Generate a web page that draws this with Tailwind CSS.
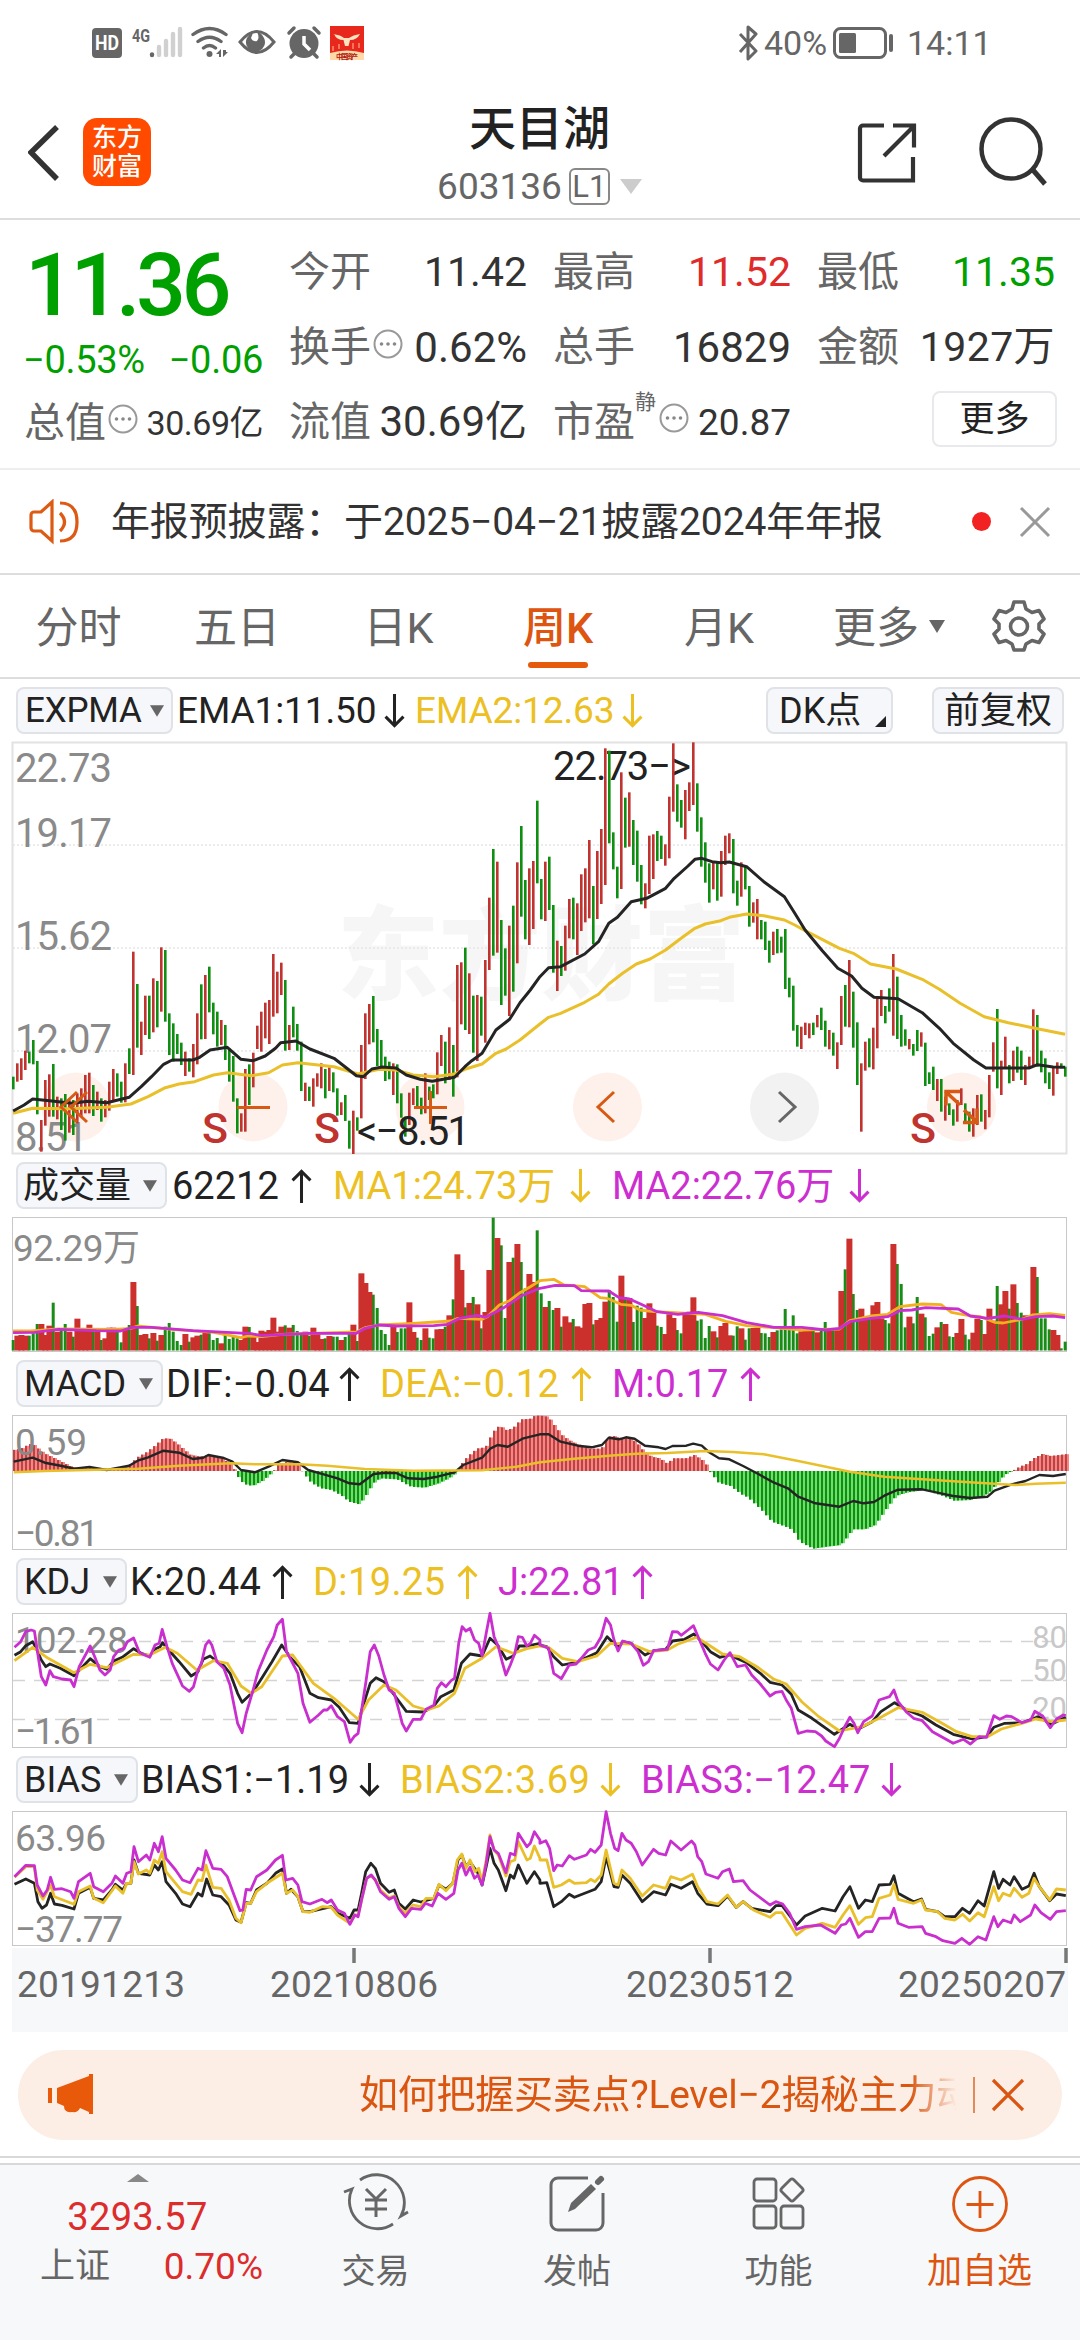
<!DOCTYPE html>
<html lang="zh-CN">
<head>
    <meta charset="UTF-8">
    <meta name="viewport" content="width=device-width, initial-scale=1.0">
    <title>天目湖 603136</title>
    <script src="https://cdn.jsdelivr.net/npm/@tailwindcss/browser@4"></script>
</head>
<body class="bg-white w-[1080px] h-[2340px] overflow-hidden font-[Roboto,'Noto_Sans_CJK_SC',sans-serif] text-[#222] leading-none">
    <!-- Shared icons -->
    <svg width="0" height="0" class="absolute">
        <symbol id="up" viewBox="0 0 22 36"><path d="M11 36V2M1.500 12L11 2.500l9.500 9.500" fill="none" stroke="currentColor" stroke-width="3.200"/></symbol>
        <symbol id="down" viewBox="0 0 22 36"><path d="M11 0v34M1.500 24l9.500 9.500 9.500-9.500" fill="none" stroke="currentColor" stroke-width="3.200"/></symbol>
        <symbol id="dots" viewBox="0 0 30 30"><circle cx="15" cy="15" r="13.5" fill="none" stroke="#999" stroke-width="2"/><circle cx="8.5" cy="15" r="1.8" fill="#888"/><circle cx="15" cy="15" r="1.8" fill="#888"/><circle cx="21.5" cy="15" r="1.8" fill="#888"/></symbol>
        <symbol id="tri" viewBox="0 0 16 13"><path d="M0 0h16L8 13z" fill="#666"/></symbol>
    </svg>

    <!-- Status bar -->
    <div class="h-[84px] flex items-center justify-between pl-[92px] pr-[88px] pt-0.5 text-[#666]">
        <svg width="274" height="36" viewBox="92 25 274 36">
            <rect x="92" y="28" width="30" height="30" rx="4" fill="#666"/>
            <text x="95" y="50" font-size="20" font-weight="700" fill="#fff" textLength="24" lengthAdjust="spacingAndGlyphs">HD</text>
            <text x="132" y="41.500" font-size="19" font-weight="700" fill="#666" textLength="18" lengthAdjust="spacingAndGlyphs">4G</text>
            <g stroke-width="4.4" stroke-linecap="round" stroke="#d0d0d0">
                <path d="M152 54.5v.5" stroke="#666"/>
                <path d="M159 47v8M166 41v14M173 34v21M180 29v26"/>
            </g>
            <g fill="none" stroke="#666" stroke-width="3.4" stroke-linecap="round">
                <path d="M193 34.5q16.500-12 33 0M198 41.500q11.500-8.500 23 0M203.500 48q6-5 12 0"/>
            </g>
            <circle cx="209.500" cy="54" r="3" fill="#666"/>
            <path d="M216 54l5-5v8h-2v-3zM223 50v7l5-5h-2v-2z" fill="#666"/>
            <path d="M240 42q17-21 34 0q-17 21-34 0z" fill="none" stroke="#666" stroke-width="3"/>
            <path d="M253 33a9.500 9.500 0 1 0 11 5q-3-6-7-6q3 6 0 9q-4 1-6-3z" fill="#666"/>
            <circle cx="304" cy="43.500" r="14.500" fill="#666"/>
            <path d="M289 33l5-5M319 33l-5-5M294 54l-3 3M314 54l3 3" stroke="#666" stroke-width="3.500" stroke-linecap="round"/>
            <path d="M304 36v8l6 6" fill="none" stroke="#fff" stroke-width="3.500"/>
            <rect x="330" y="26" width="34" height="34" fill="#e8281c"/>
            <path d="M330 53q17-5 34 0v7h-34z" fill="#ffd9a8"/>
            <path d="M333 34q8 1 11 4h5q4-3 11-4q-3 6-10 6l-1.500 6h-3.500l-1.500-6q-7 0-9.500-6z" fill="#ffe2c0"/>
            <path d="M333 51v-5M339 49v-5M353 49v-6M359 48v-5" stroke="#f58a6a" stroke-width="1.600"/>
            <text x="336" y="58.500" font-size="7" font-weight="700" fill="#b01810" textLength="22">中国资产</text>
        </svg>
        <div class="flex items-center text-[34px]">
            <svg width="24" height="36" viewBox="0 0 24 36"><path d="M3 9l16 17-8 8V2l8 7L3 27" fill="none" stroke="#666" stroke-width="3" stroke-linejoin="round"/></svg>
            <span class="ml-[3px] w-[66px]">40%</span>
            <svg width="62" height="34" viewBox="0 0 62 34" class="ml-[3px]"><rect x="1.500" y="2.500" width="51" height="29" rx="6" fill="none" stroke="#666" stroke-width="3"/><rect x="6" y="7" width="17" height="20" rx="1.500" fill="#666"/><path d="M58 10v14" stroke="#666" stroke-width="4" stroke-linecap="round"/></svg>
            <span class="ml-3 w-[85px]">14:11</span>
        </div>
    </div>

    <!-- Title bar -->
    <div class="h-[136px] border-b-2 border-[#ddd] flex justify-between pl-[28px] pr-[33px]">
        <div class="flex items-start pt-[34px] w-[400px]">
            <svg width="36" height="60" viewBox="2 0 36 60" class="mt-1"><path d="M31 5L5 30.500 31 57" fill="none" stroke="#333" stroke-width="5.500"/></svg>
            <div class="ml-[19px] size-[68px] rounded-[14px] bg-[#ff4a00] text-white text-[25px] font-medium leading-[29px] flex flex-col items-center justify-center"><span>东方</span><span>财富</span></div>
        </div>
        <div class="flex flex-col items-center pt-[21px]">
            <div class="text-[47px] leading-[48px] font-medium">天目湖</div>
            <div class="flex items-center mt-[15px] text-[37px] text-[#666]">
                <span>603136</span>
                <span class="ml-[7px] w-[41px] h-[37px] border-2 border-[#888] rounded-md text-[31px] flex items-center justify-center">L1</span>
                <svg width="22" height="15" viewBox="0 0 22 15" class="ml-[10px]"><path d="M0 0h22L11 15z" fill="#ccc"/></svg>
            </div>
        </div>
        <div class="flex items-start justify-end pt-[32px] w-[396px] gap-[62px]">
            <svg width="60" height="62" viewBox="0 0 60 62" class="mt-[6px]"><path d="M27 3.500H6a3 3 0 0 0-3 3v49a3 3 0 0 0 3 3h50V35M36 3.500h21v22M56 5L27 34" fill="none" stroke="#333" stroke-width="4.200"/></svg>
            <svg width="68" height="70" viewBox="0 0 68 70" class="mt-[1px]"><circle cx="32" cy="32" r="29.500" fill="none" stroke="#333" stroke-width="4.500"/><path d="M54 53l12 14" stroke="#333" stroke-width="5"/></svg>
        </div>
    </div>

    <!-- Quote -->
    <div class="h-[250px] border-b-2 border-[#eee] px-[25px] pt-[15px] grid grid-cols-4 gap-x-[26px] text-[41px] text-[#666]">
        <div class="flex flex-col text-[#00a000]">
            <div class="text-[88px] h-[97px] leading-[99px] font-medium tracking-[-4.500px]">11.36</div>
            <div class="flex justify-between text-[38px] h-[54px] items-center tracking-[-0.300px] -ml-[2px] pt-[2px]"><span>−0.53%</span><span>−0.06</span></div>
            <div class="flex items-center h-[70px] mt-[2px] text-[#666] -ml-[1px]"><span>总值</span><svg width="30" height="30" class="ml-0.5 mb-2 shrink-0"><use href="#dots"/></svg><span class="ml-auto text-[34px] text-[#333] tracking-[-0.500px] whitespace-nowrap">30.69亿</span></div>
        </div>
        <div class="flex flex-col">
            <div class="flex items-center justify-between h-[75px]"><span>今开</span><span class="text-[#333]">11.42</span></div>
            <div class="flex items-center h-[75px]"><span>换手</span><svg width="30" height="30" class="ml-0.5 mb-2 shrink-0"><use href="#dots"/></svg><span class="ml-auto text-[42px] text-[#333]">0.62%</span></div>
            <div class="flex items-center justify-between h-[74px]"><span>流值</span><span class="text-[42px] text-[#333] whitespace-nowrap">30.69亿</span></div>
        </div>
        <div class="flex flex-col">
            <div class="flex items-center justify-between h-[75px]"><span>最高</span><span class="text-[#e02b2b]">11.52</span></div>
            <div class="flex items-center justify-between h-[75px]"><span>总手</span><span class="text-[42px] text-[#333]">16829</span></div>
            <div class="flex items-center h-[74px]"><span>市盈</span><span class="text-[21px] mb-10">静</span><svg width="30" height="30" class="ml-[3px] mb-2 shrink-0"><use href="#dots"/></svg><span class="ml-auto text-[37px] text-[#333]">20.87</span></div>
        </div>
        <div class="flex flex-col">
            <div class="flex items-center justify-between h-[75px]"><span>最低</span><span class="text-[#00a000]">11.35</span></div>
            <div class="flex items-center justify-between h-[75px]"><span>金额</span><span class="text-[#333] tracking-[0.400px] whitespace-nowrap">1927万</span></div>
            <div class="self-end mt-[6px] -mr-[2px] w-[125px] h-[56px] border-2 border-[#e8e9ec] rounded-lg text-[35px] text-[#222] flex items-center justify-center">更多</div>
        </div>
    </div>

    <!-- Notice -->
    <div class="h-[105px] border-b-2 border-[#ddd] flex items-center pl-[28px] pr-[29px] text-[39px] text-[#333]">
        <svg width="54" height="46" viewBox="0 0 54 46"><path d="M24 3v39L13 32H6a3 3 0 0 1-3-3V16a3 3 0 0 1 3-3h7zM32 14q9 9 0 18M32 4q17 0 17 19t-17 19" fill="none" stroke="#dd5a14" stroke-width="3.200"/></svg>
        <span class="ml-[29px] tracking-[-0.150px] whitespace-nowrap pt-[2px]">年报预披露：于2025−04−21披露2024年年报</span>
        <span class="ml-auto size-[19px] rounded-full bg-[#f22222]"></span>
        <svg width="32" height="32" viewBox="0 0 32 32" class="ml-[28px]"><path d="M2 2l28 28M30 2L2 30" stroke="#999" stroke-width="3"/></svg>
    </div>

    <!-- Period tabs -->
    <div class="h-[104px] border-b-2 border-[#ddd] flex items-center text-[43px] text-[#666]">
        <span class="w-[157px] text-center pt-[4px]">分时</span>
        <span class="w-[160px] text-center pt-[4px]">五日</span>
        <span class="w-[163px] text-center pt-[4px]">日K</span>
        <span class="w-[156px] text-center pt-[4px] text-[#dd5510] font-medium relative">周K<i class="absolute left-[48px] top-[59px] w-[60px] h-[6px] rounded-sm bg-[#e65a0c]"></i></span>
        <span class="w-[166px] text-center pt-[4px]">月K</span>
        <span class="ml-[31px] pt-[4px]">更多</span>
        <svg width="16" height="13" class="ml-[10px]"><use href="#tri"/></svg>
        <svg width="54" height="54" viewBox="0 0 54 54" class="ml-[47px]"><path d="M22 3h10l2 7 6 3.500 7-2 5 8.500-5 5v5l5 5-5 8.500-7-2-6 3.500-2 6H22l-2-6-6-3.500-7 2L2 35l5-5v-5l-5-5 5-8.500 7 2 6-3.500z" fill="none" stroke="#666" stroke-width="3.600" stroke-linejoin="round"/><circle cx="27" cy="27.500" r="8.500" fill="none" stroke="#666" stroke-width="3.600"/></svg>
    </div>

    <!-- EXPMA -->
    <div class="h-[62px] flex items-center pl-[16px] pt-[1px] text-[37px]">
        <div class="w-[157px] h-[47px] bg-[#f6f7fa] border-2 border-[#dfe2e7] rounded-lg flex items-center justify-between pl-[7px] pr-[7px] text-[35px] tracking-[-0.200px]">EXPMA<svg width="14" height="12"><use href="#tri" width="14" height="12"/></svg></div>
        <div class="ml-[4px] w-[238px] flex items-center"><span class="w-[207px] tracking-[-0.100px]">EMA1:11.50</span><svg width="21" height="34"><use href="#down"/></svg></div>
        <div class="w-[351px] flex items-center text-[#ecc022]"><span class="w-[207px] tracking-[-0.100px]">EMA2:12.63</span><svg width="21" height="34"><use href="#down"/></svg></div>
        <div class="w-[127px] h-[47px] bg-[#f6f7fa] border-2 border-[#dfe2e7] rounded-lg flex items-center pl-[11px] text-[36px] relative">DK点<svg width="11" height="11" viewBox="0 0 11 11" class="absolute right-[5px] bottom-[5px]"><path d="M11 0v11H0z" fill="#222"/></svg></div>
        <div class="ml-[39px] w-[132px] h-[47px] bg-[#f6f7fa] border-2 border-[#dfe2e7] rounded-lg flex items-center justify-center text-[36px] whitespace-nowrap">前复权</div>
    </div>
    <svg width="1080" height="414" viewBox="0 741 1080 414" class="block">
        <text x="337" y="992" font-size="102" font-weight="900" fill="#f6f6f6" textLength="408" lengthAdjust="spacingAndGlyphs">东方财富</text>
        <path d="M13 845h1053M13 948h1053M13 1051h1053" stroke="#e6e6e6" stroke-width="1.500" stroke-dasharray="2 2"/>
        <rect x="12.500" y="742.500" width="1054" height="411" fill="none" stroke="#e2e2e2" stroke-width="2"/>
        <g fill="#fef0ea"><circle cx="76" cy="1107" r="34.500"/><circle cx="253" cy="1107" r="34.500"/><circle cx="430" cy="1107" r="34.500"/><circle cx="607.500" cy="1107" r="34.500"/><circle cx="961.500" cy="1107" r="34.500"/></g>
        <circle cx="784.500" cy="1107" r="34.500" fill="#f2f2f2"/>
        <g font-size="40" fill="#8a8a8a">
            <text x="15" y="782" textLength="97">22.73</text><text x="15" y="847" textLength="97">19.17</text><text x="15" y="950" textLength="97">15.62</text><text x="15" y="1053" textLength="97">12.07</text><text x="15" y="1151" textLength="73">8.51</text>
        </g>
        <text x="553" y="780" font-size="40" fill="#222" textLength="138">22.73−&gt;</text>
        <g id="candles"></g>
        <g id="ema"></g>
        <g font-size="43" font-weight="500" fill="#c03430"><text x="202" y="1143">S</text><text x="314" y="1143">S</text><text x="910" y="1143">S</text></g>
        <text x="357" y="1145" font-size="40" fill="#222" textLength="113">&lt;−8.51</text>
        <g fill="none" stroke="#d75a14" stroke-width="3">
            <path d="M77 1092l-16 15 16 15M87 1092l-16 15 16 15M237 1107.500h33M414 1107.500h33M430.500 1091v33M614 1092l-16 15 16 15"/>
            <path d="M960 1091.500h-14v14M945 1091l15 14M963 1122.500h14v-14M978 1123l-14-13" stroke-width="3.500"/>
        </g>
        <path d="M779 1092l16 15-16 15" fill="none" stroke="#666" stroke-width="3"/>
    </svg>

    <!-- Volume -->
    <div class="h-[61px] flex items-center pl-[16px] text-[38px]">
        <div class="w-[151px] h-[47px] bg-[#f6f7fa] border-2 border-[#dfe2e7] rounded-lg flex items-center justify-between pl-[5px] pr-[8px] text-[36px] whitespace-nowrap">成交量<svg width="14" height="12"><use href="#tri" width="14" height="12"/></svg></div>
        <div class="ml-[5px] w-[161px] flex items-center"><span class="w-[119px]">62212</span><svg width="21" height="34"><use href="#up"/></svg></div>
        <div class="w-[279px] flex items-center text-[#ecc022]"><span class="w-[237px] whitespace-nowrap">MA1:24.73万</span><svg width="21" height="34"><use href="#down"/></svg></div>
        <div class="flex items-center text-[#cc2ed0]"><span class="w-[237px] whitespace-nowrap">MA2:22.76万</span><svg width="21" height="34"><use href="#down"/></svg></div>
    </div>
    <svg width="1080" height="137" viewBox="0 1216 1080 137" class="block">
        <rect x="12.500" y="1217.500" width="1054" height="134" fill="none" stroke="#c8c8c8"/>
        <text x="13" y="1261" font-size="37" fill="#8a8a8a" textLength="127">92.29万</text>
        <g id="volume"></g>
    </svg>

    <!-- MACD -->
    <div class="h-[61px] flex items-center pl-[16px] text-[38px]">
        <div class="w-[147px] h-[47px] bg-[#f6f7fa] border-2 border-[#dfe2e7] rounded-lg flex items-center justify-between pl-[6px] pr-[8px] text-[36px]">MACD<svg width="14" height="12"><use href="#tri" width="14" height="12"/></svg></div>
        <div class="ml-[3px] w-[214px] flex items-center"><span class="w-[173px] tracking-[0.300px]">DIF:−0.04</span><svg width="21" height="34"><use href="#up"/></svg></div>
        <div class="w-[232px] flex items-center text-[#ecc022]"><span class="w-[191px] tracking-[0.300px]">DEA:−0.12</span><svg width="21" height="34"><use href="#up"/></svg></div>
        <div class="flex items-center text-[#cc2ed0]"><span class="w-[128px]">M:0.17</span><svg width="21" height="34"><use href="#up"/></svg></div>
    </div>
    <svg width="1080" height="137" viewBox="0 1414 1080 137" class="block">
        <rect x="12.500" y="1415.500" width="1054" height="134" fill="none" stroke="#c8c8c8"/>
        <g id="macd"></g>
        <g font-size="37" fill="#8a8a8a"><text x="15" y="1455">0.59</text><text x="15" y="1546" textLength="84">−0.81</text></g>
        <g id="macdLines"></g>
    </svg>

    <!-- KDJ -->
    <div class="h-[61px] flex items-center pl-[16px] text-[38px]">
        <div class="w-[111px] h-[47px] bg-[#f6f7fa] border-2 border-[#dfe2e7] rounded-lg flex items-center justify-between pl-[6px] pr-[8px] text-[36px]">KDJ<svg width="14" height="12"><use href="#tri" width="14" height="12"/></svg></div>
        <div class="ml-[3px] w-[183px] flex items-center"><span class="w-[142px] tracking-[0.400px]">K:20.44</span><svg width="21" height="34"><use href="#up"/></svg></div>
        <div class="w-[185px] flex items-center text-[#ecc022]"><span class="w-[144px] tracking-[0.400px]">D:19.25</span><svg width="21" height="34"><use href="#up"/></svg></div>
        <div class="flex items-center text-[#cc2ed0]"><span class="w-[134px]">J:22.81</span><svg width="21" height="34"><use href="#up"/></svg></div>
    </div>
    <svg width="1080" height="137" viewBox="0 1612 1080 137" class="block">
        <path d="M13 1641.500h1053M13 1680.500h1053M13 1719.500h1053" stroke="#d4d4d4" stroke-width="1.500" stroke-dasharray="12 9"/>
        <rect x="12.500" y="1613.500" width="1054" height="134" fill="none" stroke="#c8c8c8"/>
        <g font-size="31" fill="#c8c8c8" text-anchor="end"><text x="1067" y="1648">80</text><text x="1067" y="1681">50</text><text x="1067" y="1719">20</text></g>
        <g font-size="37" fill="#8a8a8a"><text x="15" y="1653" textLength="113">102.28</text><text x="15" y="1744" textLength="84">−1.61</text></g>
        <g id="kdj"></g>
    </svg>

    <!-- BIAS -->
    <div class="h-[61px] flex items-center pl-[16px] text-[38px]">
        <div class="w-[122px] h-[47px] bg-[#f6f7fa] border-2 border-[#dfe2e7] rounded-lg flex items-center justify-between pl-[6px] pr-[8px] text-[36px]">BIAS<svg width="14" height="12"><use href="#tri" width="14" height="12"/></svg></div>
        <div class="ml-[3px] w-[259px] flex items-center"><span class="w-[218px]">BIAS1:−1.19</span><svg width="21" height="34"><use href="#down"/></svg></div>
        <div class="w-[241px] flex items-center text-[#ecc022]"><span class="w-[200px] tracking-[0.400px]">BIAS2:3.69</span><svg width="21" height="34"><use href="#down"/></svg></div>
        <div class="flex items-center text-[#cc2ed0]"><span class="w-[240px]">BIAS3:−12.47</span><svg width="21" height="34"><use href="#down"/></svg></div>
    </div>
    <svg width="1080" height="137" viewBox="0 1810 1080 137" class="block">
        <rect x="12.500" y="1811.500" width="1054" height="134" fill="none" stroke="#c8c8c8"/>
        <g font-size="37" fill="#8a8a8a"><text x="15" y="1851" textLength="91">63.96</text><text x="15" y="1942" textLength="108">−37.77</text></g>
        <g id="bias"></g>
    </svg>
    <svg width="1080" height="103" viewBox="0 1947 1080 103" class="block">
        <rect x="12" y="1948" width="1056" height="84" fill="#f7f8fa"/>
        <path d="M354 1948v15M710 1948v15M1066 1948v15" stroke="#777" stroke-width="3.500"/>
        <g font-size="37" fill="#666"><text x="17" y="1997" textLength="168">20191213</text><text x="270" y="1997" textLength="168">20210806</text><text x="626" y="1997" textLength="168">20230512</text><text x="898" y="1997" textLength="168">20250207</text></g>
    </svg>

    <!-- Promo banner -->
    <div class="mx-[18px] h-[90px] rounded-full bg-[#fdeee5] flex items-center pl-[30px] pr-[37px] text-[#d95510]">
        <svg width="46" height="42" viewBox="0 0 46 42"><path d="M0 14h4v15H0zM9 14L41 2V0h4v40h-4v-2l-9-4q-2 5-8 4-8 1-8-6L9 29z" fill="#e85a0a"/></svg>
        <div class="ml-[265px] w-[598px] overflow-hidden whitespace-nowrap text-[39px] leading-[60px] tracking-[-0.250px] [mask-image:linear-gradient(to_right,#000_92%,transparent)]">如何把握买卖点?Level−2揭秘主力动向</div>
        <span class="ml-auto w-[2px] h-[36px] bg-[#e08a5c]"></span>
        <svg width="34" height="34" viewBox="0 0 34 34" class="ml-[16px]"><path d="M2 2l30 30M32 2L2 32" stroke="#d95510" stroke-width="3.200"/></svg>
    </div>
    <div class="h-[18px] border-b-2 border-[#d8d8d8]"></div>

    <!-- Bottom bar -->
    <div class="mt-[5px] h-[178px] border-t-2 border-[#d8d8d8] bg-[#f7f8fa] flex text-[34px] text-[#666]">
        <div class="w-[275px] flex flex-col items-center pt-[9px]">
            <svg width="22" height="8" viewBox="0 0 22 8"><path d="M0 8h22L11 0z" fill="#888"/></svg>
            <div class="mt-[16px] text-[38px] text-[#dc2c2c] tracking-[0.300px]">3293.57</div>
            <div class="mt-[12px] ml-[28px] w-[223px] flex items-center justify-between"><span class="text-[35px]">上证</span><span class="text-[37px] text-[#dc2c2c]">0.70%</span></div>
        </div>
        <div class="w-[201px] flex flex-col items-center pt-[8px]">
            <svg width="66" height="60" viewBox="0 0 66 60"><path d="M17 7A28 28 0 0 1 58 43l7-4M50 51A28 28 0 0 1 9 16l-8 3" fill="none" stroke="#666" stroke-width="2.800"/><path d="M23 16l10 10 10-10M33 26v18M22 27h22M22 36h22" fill="none" stroke="#666" stroke-width="3"/></svg>
            <span class="mt-[21px]">交易</span>
        </div>
        <div class="w-[202px] flex flex-col items-center pt-[8px]">
            <svg width="58" height="60" viewBox="0 0 58 60"><path d="M40 5H10a7 7 0 0 0-7 7v38a7 7 0 0 0 7 7h38a7 7 0 0 0 7-7V20" fill="none" stroke="#666" stroke-width="3"/><path d="M20 39l3-9 20-19 5 5-21 20z" fill="#666"/><path d="M50 9l3-3" stroke="#666" stroke-width="6" stroke-linecap="round"/></svg>
            <span class="mt-[21px]">发帖</span>
        </div>
        <div class="w-[201px] flex flex-col items-center pt-[8px]">
            <svg width="54" height="60" viewBox="0 0 54 60"><g fill="none" stroke="#666" stroke-width="2.800"><rect x="2" y="6" width="22" height="22" rx="3"/><rect x="2" y="33" width="22" height="22" rx="3"/><rect x="29" y="33" width="22" height="22" rx="3"/><rect x="31.500" y="8.500" width="17" height="17" rx="2.500" transform="rotate(45 40 17)"/></g></svg>
            <span class="mt-[21px]">功能</span>
        </div>
        <div class="w-[201px] flex flex-col items-center pt-[8px] text-[#dd5510]">
            <svg width="60" height="60" viewBox="0 0 60 60"><circle cx="30" cy="31" r="26.500" fill="none" stroke="#dd5510" stroke-width="2.800"/><path d="M30 18v27M16.500 31.500h27" stroke="#dd5510" stroke-width="2.800"/></svg>
            <span class="mt-[21px] text-[35px]">加自选</span>
        </div>
    </div>

    <script>
        // One entry per week: colour, high, low, volume top (y values in thirds of a pixel)
        const weeks = `g1040,1078,540 r1000,1055,527 r985,1050,525 r962,1020,527 g965,1000,527 g930,1003,520 g993,1153,492 r1170,1265,492 r1050,1187,525 r1033,1160,497
g1002,1160,428 r1100,1168,515 g1105,1200,510 g1092,1232,492 r1110,1208,515 g1110,1215,530 r1090,1180,476 r1075,1160,510 r1035,1150,510 r1028,1150,494
g1065,1158,515 r1085,1140,515 g1105,1175,540 r1110,1162,535 r1055,1142,503 r1017,1110,503 g1030,1100,512 g1055,1118,547 r1000,1117,510 g955,1032,495
r665,1035,366 g762,953,438 r875,975,525 r797,915,522 g797,927,535 r745,907,519 g753,892,542 r652,845,525 g660,875,500 g850,975,489
g880,995,515 g912,972,543 g938,1005,555 r965,1038,522 g985,1025,545 r942,1042,532 r850,1003,527 g763,928,524 r735,927,515 g710,847,517
g818,913,540 g845,950,534 r870,945,550 g885,990,520 g955,1055,537 g978,1115,531 g1105,1210,535 r1150,1205,540 r1017,1205,500 g1003,1125,501
r968,1072,525 r887,957,546 r845,965,512 r818,925,515 r810,942,510 r672,860,473 r725,850,515 r698,795,500 g750,962,496 r885,960,503
g830,922,495 g882,962,513 g935,1083,525 r1058,1113,515 g1070,1113,527 r1045,1130,503 r1030,1070,520 r1000,1075,537 g1017,1105,535 r1012,1083,528
g1027,1087,530 g1075,1157,530 r1117,1155,540 g1095,1173,531 g1172,1256,520 r1142,1272,494 g1162,1202,543 r945,1165,340 r850,1047,369 r822,943,396
g798,937,404 g897,1008,444 g930,1012,510 g980,1053,522 g995,1048,555 r1000,1095,495 g1003,1120,516 g1090,1163,505 g1160,1220,505 r1088,1185,427
r1075,1125,516 g1068,1130,533 g1103,1153,540 r1030,1150,505 g1070,1110,533 g1063,1105,535 r967,1093,508 r915,1008,507 g935,1060,500 r892,1050,466
g945,1100,418 r705,1042,283 r697,883,330 g653,900,442 r730,912,429 g797,968,411 r795,993,433 g800,917,505 r690,938,456 r503,720,330
g357,677,173 r395,668,234 g570,825,256 g655,797,474 r587,858,306 g527,785,293 r397,700,252 g288,560,306 g450,628,385 r415,645,342
r393,597,366 g212,460,211 g447,568,400 r395,573,441 g380,540,423 g525,728,450 r632,783,444 g648,738,500 r587,722,469 r507,625,487
g503,628,477 r520,675,499 r433,603,503 r415,577,432 r330,565,429 g468,643,493 r363,567,480 r297,522,474 r55,465,425 g62,340,390
g307,418,411 g410,505,485 r127,477,347 g203,353,411 r187,350,414 g270,405,486 g302,455,437 g405,523,443 r460,535,474 r317,492,430
r313,447,455 g303,393,497 g317,387,501 r343,407,522 r200,385,463 r40,245,474 g163,275,510 g210,293,520 r180,328,460 r157,243,455
r37,225,412 g160,305,482 g262,410,478 g337,458,534 g400,518,498 r393,478,514 g398,512,532 r363,500,498 r317,405,489 r310,370,526
g327,490,527 g452,527,499 r397,500,505 g410,478,539 g468,590,505 r517,578,504 r507,628,503 g570,628,519 g575,660,520 g632,698,531
r605,675,516 g597,670,511 g620,668,508 g597,777,447 g743,802,508 g767,902,466 g885,950,520 r890,957,514 r878,915,513 r880,925,512
g878,915,512 r855,892,517 g833,900,506 g872,950,486 r900,958,508 g908,977,508 r937,1017,505 r798,945,393 g765,890,328 r690,892,236
g785,953,402 g877,1065,450 r1000,1205,446 r935,1022,475 g925,1012,474 r893,1018,436 r803,955,426 r780,858,475 g828,880,480 g775,845,490
r672,917,252 g740,927,312 g855,950,372 g898,947,502 r927,958,470 g942,977,490 g900,963,411 r907,950,461 g938,1068,472 g1027,1062,528
g1010,1080,521 r1047,1113,502 g1047,1145,486 r1100,1172,492 g1120,1155,529 g1138,1187,531 r1110,1175,519 r1075,1125,477 g1120,1175,524 g1145,1205,538
r1135,1220,518 r1095,1185,476 g1093,1175,480 r1140,1198,522 r1035,1162,446 r937,1025,482 g837,1075,378 r992,1095,433 r920,1015,393 g1005,1060,446
r962,1053,373 g950,1028,429 g962,1050,458 r1005,1065,466 r980,1012,475 r838,1010,321 g855,1010,351 g962,1027,475 g985,1060,475 g1027,1077,508
r1013,1097,510 r997,1032,525 g1000,1015,565 g1010,1040,545`.split(/\s+/);

        const RED = '#c03430', GREEN = '#0f8f12';
        const BLACK = '#242424', YELLOW = '#e9bf2a', PURPLE = '#c92fce';
        const XS = 2.904; // horizontal units per pixel
        const put = (id, html) => document.getElementById(id).insertAdjacentHTML('beforeend', html);

        // Points are "x,y x,y | x,y ..."; the part after the bar continues in the right half
        function points(str, top) {
            return str.split('|').flatMap((half, h) => half.trim().split(/\s+/).map(p => {
                const [x, y] = p.split(',').map(Number);
                return [(x + h * 1568) / XS, top + y / 3];
            }));
        }
        function line(id, color, top, str, width = 2.8) {
            const pts = points(str, top).map(p => p[0].toFixed(1) + ',' + p[1].toFixed(1)).join(' ');
            put(id, `<polyline points="${pts}" fill="none" stroke="${color}" stroke-width="${width}" stroke-linejoin="round"/>`);
        }

        // Candles and volume bars
        let candles = '', green = '', red = '';
        weeks.forEach((w, i) => {
            const [hi, lo, vol] = w.slice(1).split(',').map(Number);
            const up = w[0] === 'r', x = 13.2 + i * 4;
            candles += `<rect x="${x - 1.2}" y="${730 + hi / 3}" width="2.600" height="${(lo - hi) / 3}" fill="${up ? RED : GREEN}"/>`;
            const y = 1160 + vol / 3, h = 1350.5 - y;
            if (up) red += `<rect x="${x - 2.8}" y="${y}" width="6" height="${h}" fill="#cc302c"/>`;
            else green += `<rect x="${x - 1.5}" y="${y}" width="3" height="${h}" fill="#188c16"/>`;
        });
        put('candles', candles);
        put('volume', green + red);

        line('ema', YELLOW, 730, '38,1150 95,1135 200,1136 310,1132 380,1122 430,1100 480,1073 520,1062 565,1055 620,1035 660,1028 730,1037 780,1028 820,1005 865,998 970,1010 1040,1032 1100,1018 1150,1020 1200,1035 1260,1040 1320,1032 1350,1018 1400,1002 1440,970 1470,957 1510,930 1568,882 | 0,882 25,862 60,850 130,817 170,793 200,762 240,730 280,702 320,687 365,660 410,625 450,595 480,582 525,572 550,562 600,552 650,557 710,570 740,585 770,602 870,655 910,670 960,702 1035,717 1110,748 1160,778 1220,820 1290,860 1360,878 1430,893 1525,913', 3);
        line('ema', BLACK, 730, '38,1143 70,1125 95,1107 150,1113 210,1120 255,1114 310,1118 375,1102 410,1070 440,1040 475,1003 500,990 560,990 580,982 610,960 660,952 700,988 735,992 770,978 800,955 815,938 860,933 900,957 970,985 1010,1017 1035,1037 1055,1040 1080,1017 1110,1011 1150,1014 1180,1035 1220,1048 1255,1054 1320,1042 1350,1010 1370,992 1400,970 1440,900 1480,868 1510,818 1540,780 1568,740 | 0,740 25,713 60,710 130,672 170,635 200,580 225,562 265,515 310,505 365,475 390,445 430,408 450,388 470,385 500,395 525,398 550,396 600,410 650,455 710,500 740,550 770,600 820,662 865,715 905,738 935,775 970,802 1040,806 1110,848 1160,895 1200,940 1260,990 1295,1014 1420,1014 1445,1004 1490,1011 1525,1012', 3);

        line('volume', '#f2b01e', 1160, '38,513 90,513 170,507 330,508 380,505 400,498 500,508 620,517 670,527 700,533 720,528 760,530 820,523 900,520 1035,516 1060,503 1100,495 1200,490 1310,483 1330,475 1400,478 1415,470 1450,435 1480,422 1510,398 1540,380 1568,362 | 0,362 40,358 70,375 130,380 150,395 175,413 195,415 235,433 265,436 290,450 330,455 380,457 430,460 480,463 540,484 600,497 680,503 760,510 870,507 900,482 960,468 1010,463 1045,440 1110,432 1165,434 1195,457 1250,468 1280,470 1320,487 1345,489 1400,478 1430,465 1480,461 1525,466');
        line('volume', PURPLE, 1160, '38,518 100,517 170,508 280,512 350,513 385,502 440,502 560,512 660,517 730,521 760,527 830,523 900,520 1035,520 1060,505 1100,495 1150,498 1260,497 1300,493 1335,475 1385,466 1410,472 1460,445 1515,407 1568,385 | 0,385 45,376 100,377 120,392 200,393 230,413 260,417 300,436 340,455 400,463 460,457 530,467 600,488 680,502 760,502 830,510 870,505 900,485 960,475 1010,470 1045,452 1080,450 1120,443 1215,447 1250,468 1300,475 1350,468 1400,478 1440,470 1490,468 1525,473');

        // MACD histogram, interpolated from its outline
        const outline = points('36,870 60,865 75,856 90,850 110,868 125,880 150,892 175,905 200,918 220,926 260,922 300,926 340,926 370,918 395,892 420,878 445,858 470,835 490,836 510,850 530,868 550,885 580,890 605,885 640,895 665,910 680,933 690,955 705,972 730,978 760,962 790,935 805,912 830,906 860,912 875,935 900,968 930,985 960,990 990,1008 1010,1025 1040,1033 1060,1005 1080,970 1100,955 1150,958 1175,972 1190,980 1230,983 1270,970 1300,955 1320,940 1330,922 1345,900 1370,875 1390,862 1405,865 1425,822 1440,800 1455,802 1470,812 1490,800 1510,778 1535,777 1550,767 1567,767 | 0,767 20,770 40,798 60,825 80,840 110,855 140,866 175,866 190,838 205,826 230,835 255,835 275,845 295,870 320,890 345,895 365,910 385,895 420,895 445,885 460,895 475,905 490,935 515,968 550,978 580,1002 600,1012 640,1050 670,1085 710,1100 730,1110 750,1145 790,1166 830,1160 870,1155 890,1130 905,1108 940,1108 970,1095 1000,1050 1030,1008 1060,998 1110,990 1160,1005 1200,1022 1250,1020 1300,1000 1320,975 1345,945 1370,932 1390,920 1410,912 1430,895 1455,882 1480,888 1530,882', 1160);
        let bars = '', seg = 0;
        for (let i = 0; i < 264; i++) {
            const x = 13 + i * 4;
            while (seg < outline.length - 2 && outline[seg + 1][0] < x) seg++;
            const [a, b] = [outline[seg], outline[seg + 1]];
            const y = a[1] + (b[1] - a[1]) * Math.min(1, (x - a[0]) / (b[0] - a[0] || 1));
            const top = Math.min(y, 1471), h = Math.abs(y - 1471), up = y < 1471;
            bars += `<rect x="${x}" y="${top}" width="4" height="${h}" fill="${up ? '#f98484' : '#6be06b'}"/><rect x="${x}" y="${top}" width="2" height="${h}" fill="${up ? '#b84444' : '#138c13'}"/>`;
        }
        put('macd', bars);
        line('macdLines', BLACK, 1160, '40,905 95,893 130,908 180,918 215,926 260,921 310,930 375,917 400,902 430,892 475,872 520,878 560,897 590,893 605,885 650,894 675,905 700,930 740,937 780,920 820,900 865,907 895,930 940,943 980,955 1015,970 1045,973 1085,942 1120,938 1150,939 1185,955 1230,957 1270,950 1320,937 1345,915 1400,893 1425,865 1445,855 1475,860 1520,835 1568,823 | 0,823 25,823 60,845 110,857 150,862 180,855 200,833 230,838 250,832 275,836 305,857 345,862 365,867 385,858 425,857 445,851 470,857 490,876 520,895 550,898 590,918 630,940 680,968 720,985 750,1010 800,1030 870,1040 910,1023 940,1030 970,1026 1000,1007 1040,989 1110,988 1150,997 1200,1008 1250,1014 1300,1010 1320,992 1370,973 1410,963 1450,945 1490,948 1527,942', 2.4);
        line('macdLines', YELLOW, 1160, '40,937 130,933 400,926 520,917 670,910 740,913 870,913 950,917 1060,927 1200,932 1400,931 1500,920 1568,907 | 0,907 100,896 200,887 280,881 370,879 480,873 560,876 650,883 750,903 820,918 900,935 1000,950 1100,957 1200,964 1320,971 1380,975 1440,971 1527,968', 2.4);

        line('kdj', BLACK, 1550, '42,316 60,305 75,287 95,275 105,295 120,330 133,350 145,342 175,355 215,377 240,350 262,326 290,350 310,358 330,333 355,322 388,296 410,310 435,318 450,297 465,290 472,278 490,300 520,335 555,378 575,365 590,328 610,318 625,330 650,347 668,370 690,430 703,457 735,425 760,385 790,335 818,285 845,325 870,350 900,430 925,443 962,450 985,472 1015,518 1040,520 1055,465 1075,400 1092,383 1115,395 1145,435 1180,484 1230,486 1260,468 1280,440 1318,420 1340,340 1365,312 1400,318 1423,265 1445,285 1470,328 1490,318 1508,288 1530,288 1568,280 | 0,285 20,290 40,320 65,345 105,337 165,308 195,260 225,290 240,275 265,280 305,315 330,302 365,298 385,273 420,268 447,252 470,275 495,305 522,322 550,315 600,338 640,370 668,397 703,405 730,433 750,480 790,505 855,553 900,523 923,538 965,515 990,485 1030,458 1065,480 1110,498 1150,525 1200,553 1255,567 1297,560 1318,532 1350,520 1400,518 1447,500 1485,523 1527,502');
        line('kdj', YELLOW, 1550, '42,332 95,292 140,325 215,368 262,343 310,353 388,313 435,315 480,292 515,310 572,361 620,332 660,340 700,408 730,430 760,410 820,318 850,315 910,400 970,445 1040,508 1070,450 1115,405 1150,420 1200,468 1240,480 1275,468 1320,430 1350,355 1400,325 1440,290 1490,310 1530,296 1568,288 | 0,288 25,292 65,325 110,335 165,318 205,280 265,282 320,305 370,300 400,283 455,262 490,285 530,312 580,320 630,350 680,388 715,402 760,455 810,500 870,543 935,530 985,505 1040,473 1110,487 1160,515 1210,545 1255,560 1300,560 1340,537 1400,520 1440,507 1485,515 1527,510');
        line('kdj', PURPLE, 1550, '42,292 60,275 75,245 90,240 100,243 108,300 120,380 133,405 145,362 155,380 180,387 205,390 215,410 230,350 262,288 275,320 290,360 305,375 320,360 330,320 345,300 360,295 370,275 388,264 405,308 420,315 435,322 450,285 462,280 471,238 485,290 500,340 520,385 530,408 550,424 562,410 575,360 585,340 597,285 607,272 615,285 630,335 650,355 668,405 690,520 703,548 715,490 735,420 750,362 775,300 795,260 805,225 820,208 832,305 845,330 865,370 880,460 900,517 925,495 940,480 950,480 962,467 980,500 1000,515 1017,577 1028,560 1040,550 1050,480 1062,400 1075,305 1087,285 1100,318 1115,375 1130,420 1145,430 1158,480 1168,520 1180,543 1200,508 1222,508 1237,478 1260,466 1270,415 1282,398 1295,410 1310,392 1320,385 1332,280 1342,230 1353,243 1365,235 1378,270 1390,280 1400,318 1412,250 1423,190 1435,260 1447,290 1458,335 1469,375 1482,345 1495,310 1505,260 1517,262 1530,288 1540,280 1552,256 1568,270 | 0,285 25,295 40,370 62,386 85,345 105,342 120,325 140,300 160,292 178,260 192,205 205,225 215,270 227,303 240,273 265,280 285,305 300,346 315,335 330,302 370,298 385,245 400,246 410,256 430,240 446,227 460,262 480,310 495,342 517,360 535,330 552,308 573,350 597,345 615,375 640,402 668,438 685,427 703,424 715,450 730,475 750,550 775,543 800,545 818,558 830,573 855,590 870,565 885,530 900,502 912,520 923,548 940,515 965,498 985,450 1015,440 1028,420 1040,455 1065,487 1085,505 1110,512 1140,545 1200,580 1230,568 1250,582 1275,560 1297,562 1318,497 1335,508 1355,498 1370,500 1400,518 1425,510 1437,484 1460,498 1482,533 1500,507 1520,495 1527,497');

        line('bias', BLACK, 1550, '42,1003 75,987 100,1000 110,1055 122,1075 135,1065 147,1030 158,1062 180,1066 215,1077 228,1030 262,1012 272,1045 300,1050 325,1020 335,1003 357,1020 368,1000 380,1000 389,930 402,970 435,975 448,945 460,960 471,935 482,995 510,1030 530,1062 552,1070 575,1030 587,1038 600,987 618,1035 642,1040 665,1065 685,1110 700,1117 715,1058 728,1060 745,1020 775,1000 800,970 820,957 832,1030 845,1018 865,1040 880,1085 900,1085 962,1070 980,1090 1016,1105 1028,1080 1040,1080 1050,1030 1062,965 1077,940 1090,955 1105,1000 1130,1027 1145,1020 1158,1060 1177,1077 1200,1050 1222,1056 1260,1045 1275,1005 1295,1018 1315,1000 1330,930 1341,915 1353,950 1365,935 1388,970 1400,1005 1412,950 1423,895 1435,940 1447,960 1469,1022 1482,975 1492,985 1505,945 1530,1000 1552,965 1568,990 | 0,1000 20,998 40,1070 62,1055 85,1033 100,1042 160,1018 178,995 192,920 215,1010 227,1012 238,975 262,1000 297,1055 330,1025 365,1035 380,1003 410,1015 443,995 458,1030 485,1062 517,1067 545,1038 570,1072 590,1055 615,1075 668,1085 685,1067 703,1066 745,1125 770,1098 820,1075 857,1083 880,1040 900,1010 925,1075 945,1050 965,1055 985,1005 1017,1003 1028,977 1040,1030 1085,1055 1108,1047 1120,1078 1155,1085 1175,1100 1205,1100 1227,1075 1248,1090 1272,1052 1290,1068 1318,965 1332,1015 1345,988 1365,1005 1377,980 1400,1018 1420,1008 1435,970 1450,1010 1480,1052 1500,1032 1527,1037');
        line('bias', YELLOW, 1550, '42,982 75,950 100,950 108,1020 125,1048 147,1005 158,1040 215,1063 228,1025 262,1008 272,1045 300,1058 335,1008 357,1030 368,1000 380,1000 389,935 402,972 425,960 435,970 448,930 460,940 471,905 482,965 510,1000 530,1025 555,1033 575,990 587,992 598,945 618,1012 642,1015 665,1050 685,1105 700,1118 715,1060 728,1060 745,1025 775,1000 820,970 832,1030 850,1020 865,1040 880,1085 900,1087 935,1070 962,1072 980,1095 1016,1120 1030,1095 1040,1095 1050,1050 1065,985 1078,977 1090,990 1105,1020 1130,1043 1145,1037 1158,1070 1177,1090 1200,1065 1222,1070 1237,1045 1260,1045 1275,1003 1295,1022 1315,1000 1328,930 1341,912 1353,955 1365,930 1380,965 1390,955 1400,995 1412,930 1423,855 1435,900 1447,915 1469,978 1482,935 1495,930 1505,875 1530,930 1540,925 1552,888 1568,925 | 0,930 20,930 40,1012 62,1005 85,990 100,1000 135,998 147,988 160,995 178,975 192,900 215,1000 227,1005 238,960 262,985 297,1038 330,1005 365,1015 380,980 410,990 443,973 458,1010 485,1055 517,1062 545,1035 570,1072 590,1055 620,1080 668,1102 685,1088 703,1088 745,1155 770,1135 820,1120 857,1132 880,1095 900,1067 925,1123 945,1103 965,1100 985,1045 1017,1035 1028,1003 1040,1048 1085,1060 1108,1050 1120,1080 1155,1085 1175,1105 1205,1110 1227,1093 1248,1113 1272,1088 1290,1100 1318,1010 1332,1052 1345,1030 1365,1038 1377,1015 1400,1042 1420,1030 1435,985 1450,1010 1480,1050 1500,1017 1527,1020');
        line('bias', PURPLE, 1550, '42,980 75,946 100,947 108,1005 125,1038 137,1020 147,982 158,1018 180,1016 205,1025 215,1045 228,995 262,970 272,1010 300,1025 325,1000 335,978 357,1000 368,970 380,965 389,890 402,935 425,915 435,930 448,880 460,905 471,860 482,925 510,960 530,990 552,998 575,955 587,960 598,902 618,955 642,958 660,980 685,1050 697,1082 705,1080 715,1018 728,1020 745,980 775,960 800,930 820,916 830,990 850,985 865,1005 877,1055 900,1062 935,1048 950,1058 962,1050 980,1080 1000,1090 1016,1123 1030,1095 1040,1100 1050,1050 1065,985 1078,975 1090,990 1105,1025 1130,1048 1145,1040 1158,1075 1177,1100 1195,1075 1222,1078 1235,1060 1255,1068 1272,1030 1295,1048 1318,1030 1330,960 1341,940 1353,975 1365,952 1378,985 1388,975 1400,1005 1412,940 1423,860 1435,900 1447,910 1469,968 1482,910 1495,915 1505,850 1530,890 1540,880 1552,845 1568,870 | 0,880 17,872 28,895 40,962 50,945 65,948 85,917 100,928 135,915 147,898 160,907 178,885 192,785 205,850 217,895 227,902 238,850 250,870 265,880 280,905 297,945 330,898 345,910 365,915 380,873 410,900 440,873 450,885 458,920 470,935 482,972 517,985 530,965 550,957 562,995 590,992 610,1020 668,1065 685,1055 705,1062 725,1090 745,1138 770,1130 815,1125 857,1150 875,1125 888,1122 900,1105 925,1162 945,1145 965,1145 985,1105 1017,1104 1028,1075 1040,1120 1070,1132 1110,1130 1120,1150 1150,1160 1170,1172 1205,1180 1225,1165 1248,1183 1272,1160 1295,1170 1318,1100 1330,1130 1345,1110 1368,1118 1377,1095 1395,1115 1425,1095 1437,1065 1455,1088 1482,1108 1500,1085 1527,1082');
    </script>
</body>
</html>
